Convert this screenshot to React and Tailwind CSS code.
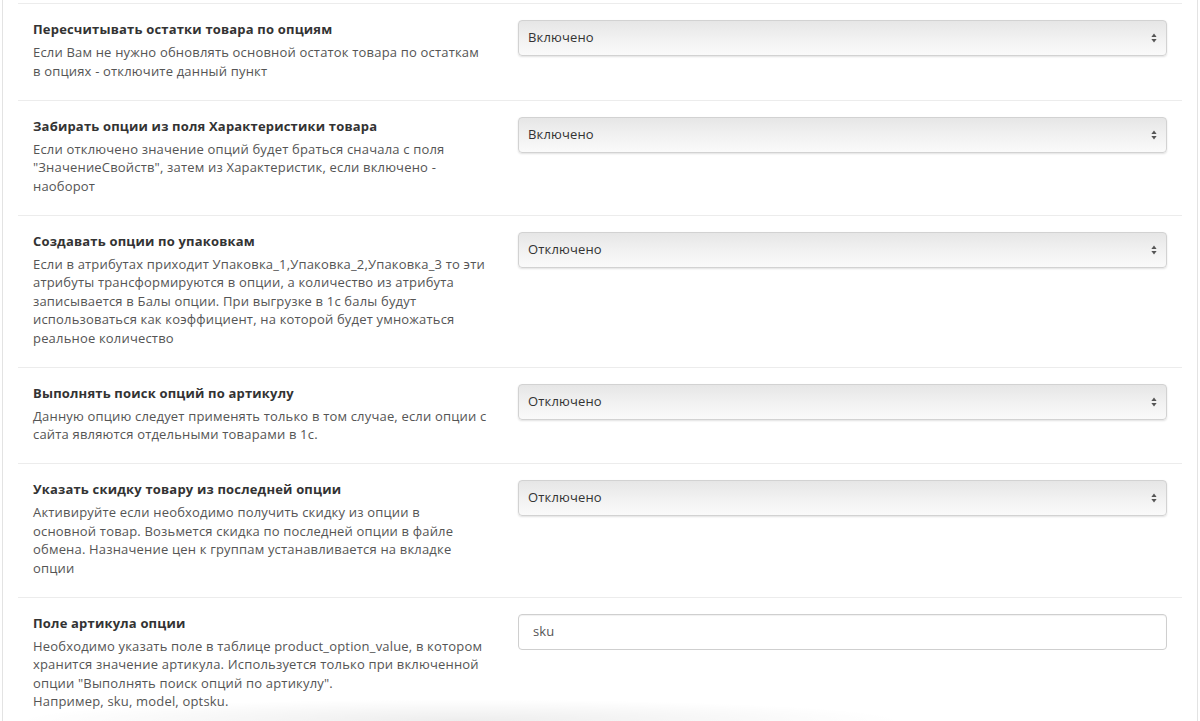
const rows = [
  {
    title: "Пересчитывать остатки товара по опциям",
    desc: ["Если Вам не нужно обновлять основной остаток товара по остаткам", "в опциях - отключите данный пункт"],
    value: "Включено",
  },
  {
    title: "Забирать опции из поля Характеристики товара",
    desc: [
      "Если отключено значение опций будет браться сначала с поля",
      '"ЗначениеСвойств", затем из Характеристик, если включено -',
      "наоборот",
    ],
    value: "Включено",
  },
  {
    title: "Создавать опции по упаковкам",
    desc: [
      "Если в атрибутах приходит Упаковка_1,Упаковка_2,Упаковка_3 то эти",
      "атрибуты трансформируются в опции, а количество из атрибута",
      "записывается в Балы опции. При выгрузке в 1с балы будут",
      "использоваться как коэффициент, на которой будет умножаться",
      "реальное количество",
    ],
    value: "Отключено",
  },
  {
    title: "Выполнять поиск опций по артикулу",
    desc: ["Данную опцию следует применять только в том случае, если опции с", "сайта являются отдельными товарами в 1с."],
    value: "Отключено",
  },
  {
    title: "Указать скидку товару из последней опции",
    desc: [
      "Активируйте если необходимо получить скидку из опции в",
      "основной товар. Возьмется скидка по последней опции в файле",
      "обмена. Назначение цен к группам устанавливается на вкладке",
      "опции",
    ],
    value: "Отключено",
  },
  {
    title: "Поле артикула опции",
    desc: [
      "Необходимо указать поле в таблице product_option_value, в котором",
      "хранится значение артикула. Используется только при включенной",
      'опции "Выполнять поиск опций по артикулу".',
      "Например, sku, model, optsku.",
    ],
    input: "sku",
  },
];

function SelectBox({ value }) {
  return (
    <div className="relative flex h-[36px] items-center rounded-[4px] border border-[#d2d2d2] bg-gradient-to-b from-[#e6e6e6] via-[#f1f1f1] to-[#fafafa] pl-[9px] text-[13px] tracking-[0.15px] text-[#333] shadow-[0_1px_2px_rgba(0,0,0,0.12)]">
      {value}
      <svg className="absolute right-[9px] top-1/2 -translate-y-1/2" width="6" height="10" viewBox="0 0 6 10">
        <path d="M3 0.5 L5.6 4 L0.4 4 Z" fill="#555" />
        <path d="M3 9.5 L5.6 6 L0.4 6 Z" fill="#555" />
      </svg>
    </div>
  );
}

function TextInput({ value }) {
  return (
    <div className="flex h-[36px] items-center rounded-[4px] border border-[#cfcfcf] bg-white pl-[14px] text-[13px] tracking-[0.15px] text-[#555] shadow-[inset_0_1px_1px_rgba(0,0,0,0.06)]">
      {value}
    </div>
  );
}

export default function App() {
  return (
    <div className="relative h-[721px] overflow-hidden bg-white font-['Open_Sans',sans-serif]">
      <div className="ml-[2px] h-full w-[1196px] border-x border-[#e3e3e3] px-[15px] pt-[3px]">
        {rows.map((row) => (
          <div key={row.title} className="grid grid-cols-12 border-t border-[#ececec] pt-[16px] pb-[19.5px]">
            <div className="col-span-5 px-[15px] text-[13px] leading-[18.5px] tracking-[0.18px]">
              <div className="mb-[4.5px] font-bold text-[#333]">{row.title}</div>
              {row.desc.map((d) => (
                <div key={d} className="whitespace-nowrap text-[#555]">
                  {d}
                </div>
              ))}
            </div>
            <div className="col-span-7 px-[15px]">
              {row.input ? <TextInput value={row.input} /> : <SelectBox value={row.value} />}
            </div>
          </div>
        ))}
      </div>
      {/* shadow of the bar below the fold */}
      <div className="pointer-events-none absolute bottom-0 left-[10px] h-[22px] w-[900px] bg-[radial-gradient(ellipse_at_bottom,rgba(0,0,0,0.07),transparent_70%)]"></div>
    </div>
  );
}
